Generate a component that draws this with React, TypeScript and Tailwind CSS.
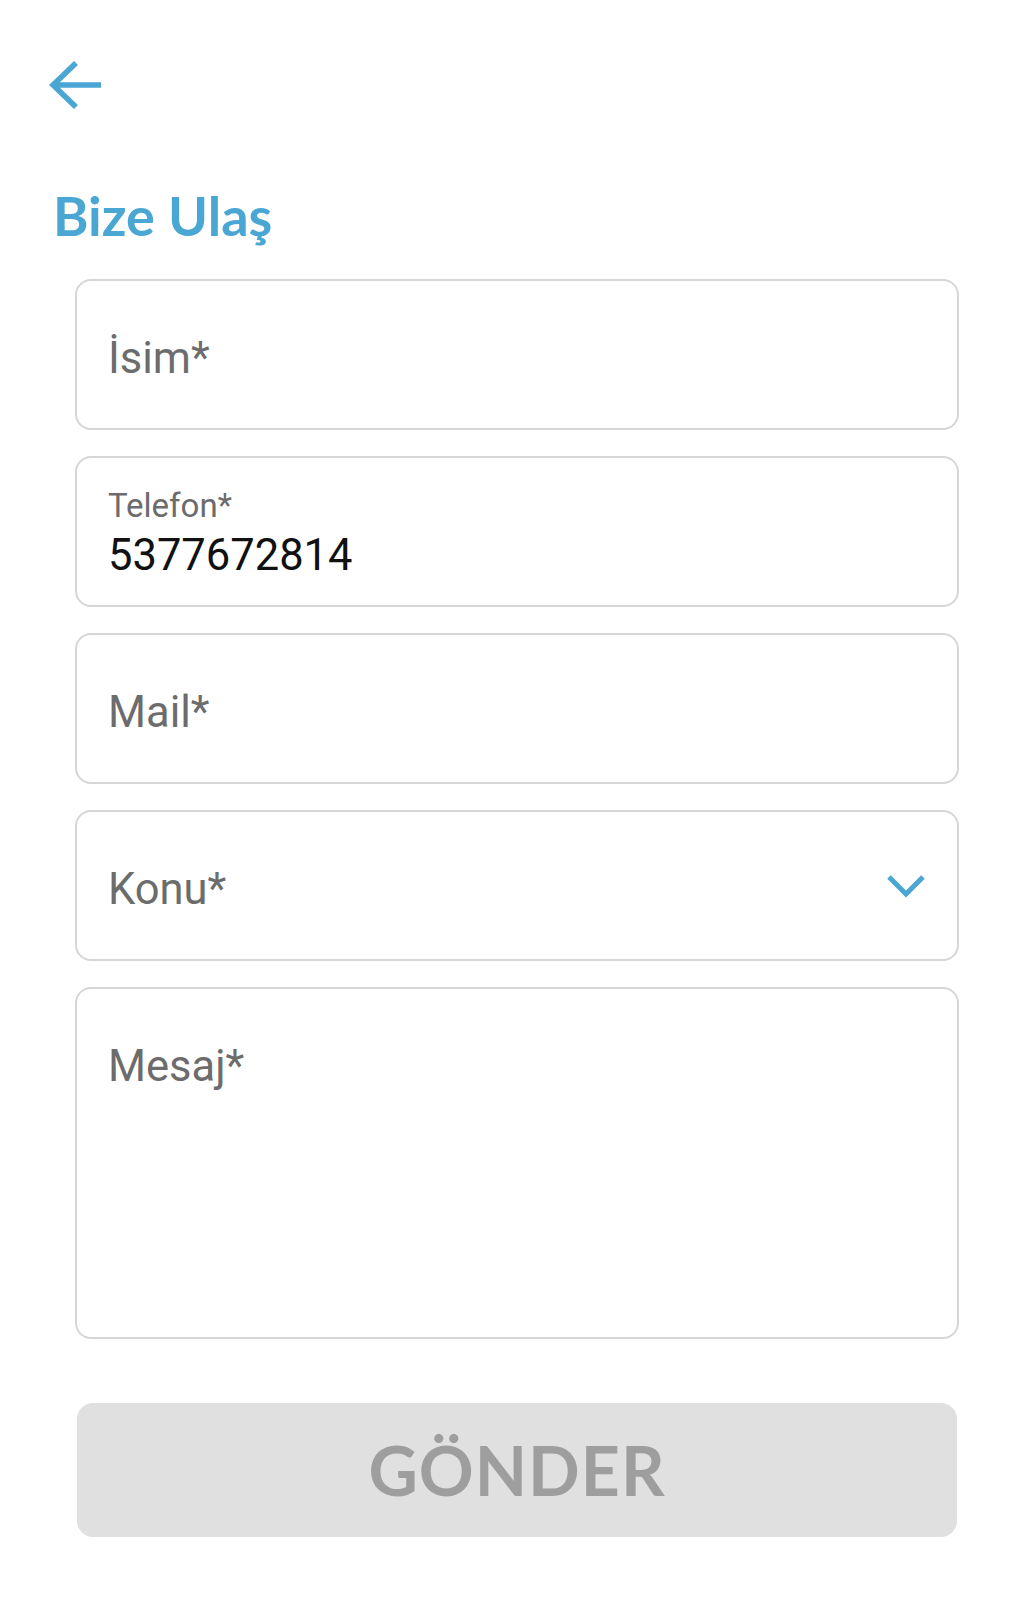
import React from "react";

const BLUE = "#4aa6d3";

function Field({ label }: { label: string }) {
  return (
    <div className="h-[151px] rounded-[16px] border-2 border-[#d6d6d6] bg-white pl-[31px] pt-[9px] flex items-center">
      <span className="text-[43.5px] leading-none text-[#6c6c6c]" style={{ fontFamily: "Roboto, sans-serif" }}>
        {label}
      </span>
    </div>
  );
}

export default function App() {
  return (
    <div className="min-h-[1600px] w-[1032px] bg-white" style={{ fontFamily: "Roboto, sans-serif" }}>
      <div className="pt-[61px] pl-[49px]">
        <svg width="54" height="48" viewBox="0 0 54 48" fill="none">
          <polyline points="27,2 4,24 27,46" stroke={BLUE} strokeWidth="5.6" strokeLinejoin="miter" fill="none" />
          <line x1="4" y1="24" x2="52" y2="24" stroke={BLUE} strokeWidth="5.6" />
        </svg>
      </div>
      <h1
        className="mt-[80px] ml-[53px] text-[54px] leading-none font-bold text-[#4aa6d3]"
        style={{ fontFamily: "Lato, sans-serif" }}
      >
        Bize Ulaş
      </h1>
      <div className="mt-[36px] ml-[75px] mr-[73px] flex flex-col gap-[26px]">
        <Field label="İsim*" />
        <div className="h-[151px] rounded-[16px] border-2 border-[#d6d6d6] bg-white pl-[31px] pt-[31px]">
          <div className="text-[33px] leading-none text-[#6c6c6c]">Telefon*</div>
          <div className="mt-[12px] text-[43.5px] leading-none text-[#111111]">5377672814</div>
        </div>
        <Field label="Mail*" />
        <div className="h-[151px] rounded-[16px] border-2 border-[#d6d6d6] bg-white pl-[31px] pr-[31px] pt-[9px] flex items-center justify-between">
          <span className="text-[43.5px] leading-none text-[#6c6c6c]">Konu*</span>
          <svg width="40" height="26" viewBox="0 0 40 26" fill="none" className="-mt-[9px]">
            <polyline points="3,4 20,21 37,4" stroke={BLUE} strokeWidth="5" fill="none" />
          </svg>
        </div>
        <div className="h-[352px] rounded-[16px] border-2 border-[#d6d6d6] bg-white pl-[31px] pt-[56px]">
          <span className="text-[43.5px] leading-none text-[#6c6c6c]">Mesaj*</span>
        </div>
      </div>
      <div className="mt-[64px] ml-[77px] mr-[75px] h-[134px] rounded-[16px] bg-[#e0e0e0] flex items-center justify-center">
        <span
          className="text-[68px] leading-none font-bold tracking-[1px] text-[#9e9e9e]"
          style={{ fontFamily: "Lato, sans-serif" }}
        >
          GÖNDER
        </span>
      </div>
    </div>
  );
}
